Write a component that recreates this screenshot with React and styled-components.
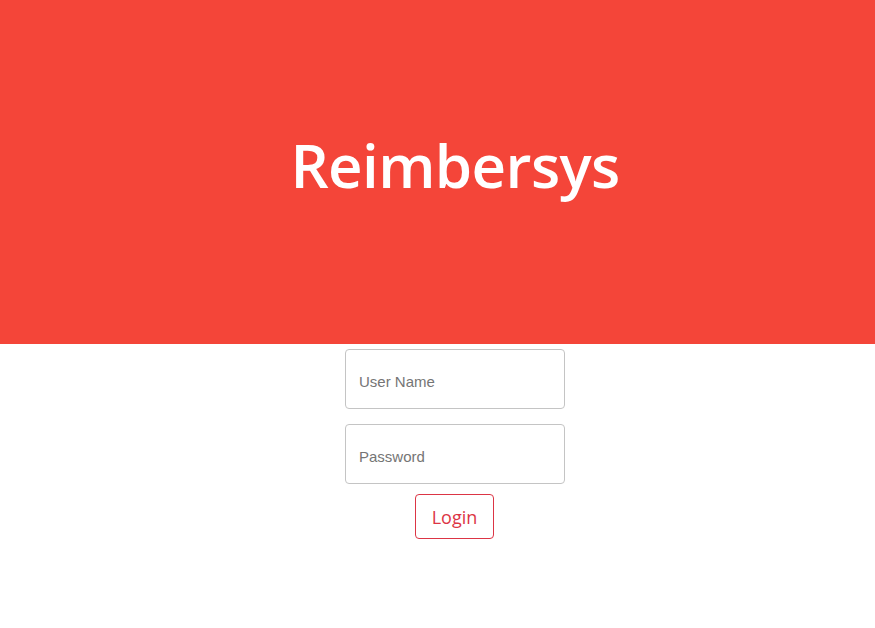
import React, { Component } from 'react';
import styled, { createGlobalStyle } from 'styled-components';

const GlobalStyle = createGlobalStyle`
    body {
        margin: 0;
        background-color: #fff;
        font-family: "Liberation Sans", Arial, sans-serif;
    }
`;

const Page = styled.div`
    display: flex;
    flex-direction: column;
    min-height: 628px;
`;

const Banner = styled.header`
    height: 344px;
    background-color: #f44539;
    display: flex;
    align-items: center;
    justify-content: center;
    padding-left: 35px;
    box-sizing: border-box;
`;

const Title = styled.h1`
    margin: 0 0 14px;
    font-family: "Open Sans", sans-serif;
    font-weight: 600;
    font-size: 60px;
    letter-spacing: -0.6px;
    color: #fff;
`;

const LoginForm = styled.form`
    display: flex;
    flex-direction: column;
    align-items: center;
    padding: 5px 0 0 35px;
`;

const Field = styled.input`
    width: 220px;
    height: 60px;
    box-sizing: border-box;
    margin-bottom: ${props => props.last ? '10px' : '15px'};
    padding: 4px 13px 0;
    border: 1px solid #c4c4c4;
    border-radius: 4px;
    font-family: "Liberation Sans", Arial, sans-serif;
    font-size: 15px;
    color: #333;
    outline: none;

    &::placeholder {
        color: #757575;
    }
`;

const Button = styled.button`
    width: 79px;
    height: 45px;
    margin-right: 1px;
    box-sizing: border-box;
    background-color: #fff;
    border: 1px solid #dc3545;
    border-radius: 4px;
    font-family: "Open Sans", sans-serif;
    font-size: 18px;
    color: #dc3545;
    cursor: pointer;
`;

export default class App extends Component {
    render() {
        return (
            <Page>
                <GlobalStyle />
                <Banner>
                    <Title>Reimbersys</Title>
                </Banner>
                <LoginForm onSubmit={e => e.preventDefault()}>
                    <Field type="text" placeholder="User Name" />
                    <Field type="password" placeholder="Password" last />
                    <Button type="submit">Login</Button>
                </LoginForm>
            </Page>
        );
    }
}
